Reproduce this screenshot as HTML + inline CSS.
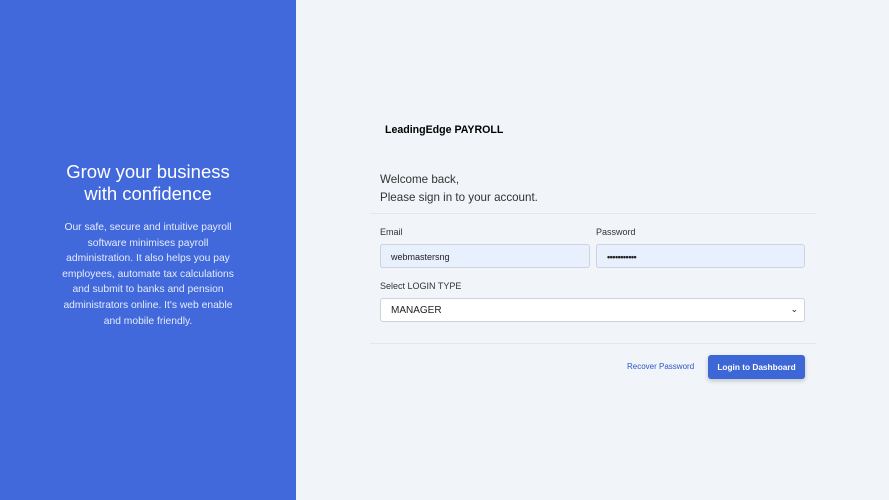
<!DOCTYPE html>
<html><head><style>
*{margin:0;padding:0;box-sizing:border-box}
body{width:889px;height:500px;font-family:"Liberation Sans",sans-serif;background:#f1f4f8;position:relative;overflow:hidden}
.left{position:absolute;left:0;top:0;width:296px;height:500px;background:#4169db;color:#fff;text-align:center}
.left h1{position:absolute;top:161px;left:0;width:296px;font-weight:normal;font-size:18.5px;line-height:22px}
.left p{position:absolute;top:220px;left:58px;width:180px;font-size:10.3px;line-height:15.6px;color:#e6ebfb}
.abs{position:absolute}
.lbl{font-size:9px;color:#333}
.inp{position:absolute;height:24px;border:1px solid #cdd3dc;border-radius:3px;background:#e8f0fe;font-size:9px;padding:7px 10px;color:#222}
</style></head><body>
<div class="left"><h1>Grow your business<br>with confidence</h1>
<p>Our safe, secure and intuitive payroll software minimises payroll administration. It also helps you pay employees, automate tax calculations and submit to banks and pension administrators online. It's web enable and mobile friendly.</p></div>
<div class="abs" style="left:385px;top:124px;font-size:10.6px;font-weight:bold;color:#000">LeadingEdge PAYROLL</div>
<div class="abs" style="left:380px;top:171px;font-size:11.6px;line-height:18px;color:#333">Welcome back,<br>Please sign in to your account.</div>
<div class="abs" style="left:370px;top:213px;width:446px;height:1px;background:#e3e6ea"></div>
<div class="abs lbl" style="left:380px;top:227px">Email</div>
<div class="abs lbl" style="left:596px;top:227px">Password</div>
<div class="inp" style="left:380px;top:244px;width:210px">webmastersng</div>
<div class="inp" style="left:596px;top:244px;width:209px;font-weight:bold;letter-spacing:-0.5px">•••••••••••</div>
<div class="abs lbl" style="left:380px;top:281px">Select LOGIN TYPE</div>
<div class="inp" style="left:380px;top:298px;width:425px;background:#fff;font-size:10px;padding:6px 10px">MANAGER<span style="position:absolute;right:6px;top:5px;font-size:9px">&#8964;</span></div>
<div class="abs" style="left:370px;top:343px;width:446px;height:1px;background:#e3e6ea"></div>
<div class="abs" style="left:627px;top:362px;font-size:8px;color:#2f55c8">Recover Password</div>
<div class="abs" style="left:708px;top:355px;width:97px;height:24px;background:#3d66d6;border-radius:3px;color:#fff;font-size:8.3px;font-weight:bold;text-align:center;line-height:24px;box-shadow:0 2px 5px rgba(0,0,0,.2)">Login to Dashboard</div>
</body></html>
